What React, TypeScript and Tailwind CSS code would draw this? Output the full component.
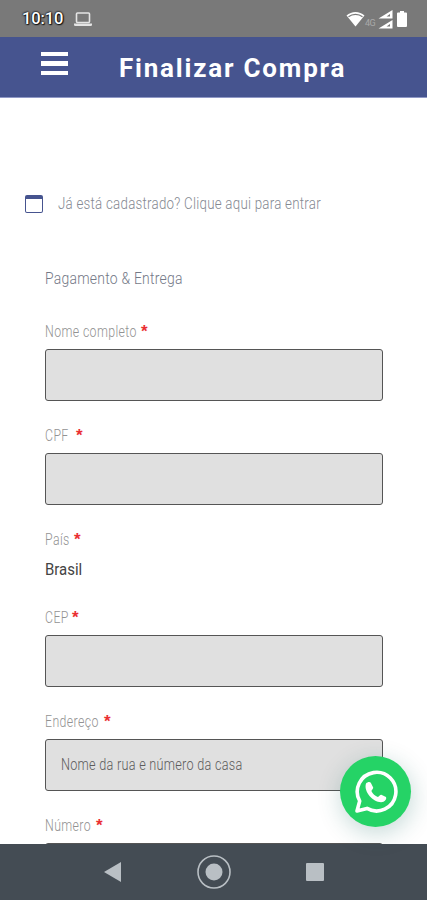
import React from 'react';

interface FieldProps {
  label: string;
  labelClass: string;
  placeholder?: string;
  children?: React.ReactNode;
}

function Field({ label, labelClass, placeholder, children }: FieldProps) {
  return (
    <div className="mb-[18px]">
      <div className="flex h-[34px] items-center text-[16px] font-light text-[#929292]">
        <span className={`${labelClass} shrink-0`}>
          <span className="inline-block origin-left scale-x-[0.77] whitespace-nowrap tracking-[0.5px]">{label}</span>
        </span>
        <span className="relative -top-px font-['Liberation_Sans'] text-[17px] leading-none font-bold text-[#ea2f33]">*</span>
      </div>
      {children ?? (
        <div className="flex h-[52px] items-center rounded-[3px] border border-[#555] bg-[#e0e0e0] pl-[15px]">
          {placeholder && (
            <span className="origin-left scale-x-[0.79] whitespace-nowrap text-[16px] font-light tracking-[0.35px] text-[#5c5c5c]">
              {placeholder}
            </span>
          )}
        </div>
      )}
    </div>
  );
}

function StatusBar() {
  return (
    <div className="flex h-[37px] shrink-0 items-center bg-[#797979] pl-[22px] pr-[20px] pt-px text-white">
      <span className="w-[52px] text-[16.5px] font-medium tracking-[-0.1px] [text-shadow:0_0_2px_#000,0_0_2px_#000,1px_1px_1px_#222]">
        10:10
      </span>
      <svg width="18" height="15" viewBox="0 0 18 15" className="text-[#e4e4e4]">
        <rect x="2.5" y="1" width="13" height="9.5" rx="1" fill="none" stroke="currentColor" strokeWidth="1.6" />
        <path d="M0 11.5h18v1.2a1.3 1.3 0 0 1-1.3 1.3H1.3A1.3 1.3 0 0 1 0 12.7z" fill="currentColor" />
      </svg>
      <svg width="19" height="16" viewBox="0 0 19 16" className="ml-auto">
        <path d="M.5 4.5C5.5-.3 13.5-.3 18.5 4.5L9.5 15.5z" fill="white" />
        <path d="M2.5 5.8c4-3.2 10-3.2 14 0" fill="none" stroke="#797979" strokeWidth="1.2" />
      </svg>
      <span className="mt-[9px] w-[13px] text-[9px] leading-none tracking-[-0.5px] text-[#a9a9a9]">4G</span>
      <svg width="15" height="19" viewBox="0 0 15 19">
        <path d="M14.5 0v8.5H.5zM14.5 10v8.5H.5z" fill="white" />
        <path d="M12 4v2.5H8.5zM12 14v2.5H8.5z" fill="#797979" />
      </svg>
      <svg width="10" height="16" viewBox="0 0 10 16" className="ml-[4px]">
        <path d="M3 0h4v1.5h2a1 1 0 0 1 1 1V15a1 1 0 0 1-1 1H1a1 1 0 0 1-1-1V2.5a1 1 0 0 1 1-1h2z" fill="white" />
      </svg>
    </div>
  );
}

function Header() {
  return (
    <header className="flex h-[61px] shrink-0 items-center border-b border-[#8f98c6] bg-[#46548f] text-white">
      <button className="mb-[7px] ml-[41px] flex w-[27px] flex-col gap-[5px]">
        <span className="h-[4.5px] w-full bg-white" />
        <span className="h-[4.5px] w-full bg-white" />
        <span className="h-[4.5px] w-full bg-white" />
      </button>
      <h1 className="ml-[51px] mt-[2px] whitespace-nowrap text-[26px] font-bold tracking-[1.8px]">Finalizar Compra</h1>
    </header>
  );
}

function NavBar() {
  return (
    <nav className="flex h-[56px] shrink-0 items-center bg-[#444c54] text-[#b9bfc4]">
      <svg width="17" height="20" viewBox="0 0 17 20" className="ml-[104px]">
        <path d="M0 10L17 0v20z" fill="currentColor" />
      </svg>
      <svg width="34" height="34" viewBox="0 0 34 34" className="ml-[76px]">
        <circle cx="17" cy="17" r="16" fill="none" stroke="currentColor" strokeWidth="1.6" />
        <circle cx="17" cy="17" r="8.5" fill="currentColor" />
      </svg>
      <span className="ml-[75px] size-[18px] rounded-[1px] bg-[#b9bfc4]" />
    </nav>
  );
}

function WhatsAppIcon() {
  return (
    <svg width="44" height="44" viewBox="0 0 44 44" fill="none">
      <path d="M3 41l2.7-10A19.3 19.3 0 1 1 13 38.4z" stroke="white" strokeWidth="3.6" strokeLinejoin="round" />
      <path
        d="M12 13.5c1.5-1.6 3.8-2 4.8-.8l2.4 4.8c.4 1-1.6 2.600-1.800 3.500 1.200 2.700 3.800 5 6.500 6 1-.2 2.300-2.500 3.400-2.200l4.700 2.300c.8 1.400-.3 3.800-2.500 4.700C21.500 34.500 9 22.500 12 13.500z"
        fill="white"
      />
    </svg>
  );
}

export default function App() {
  return (
    <div className="flex h-[900px] w-[427px] flex-col overflow-hidden bg-white font-[Roboto,sans-serif]">
      <StatusBar />
      <Header />

      <main className="min-h-0 flex-1 overflow-hidden">
        <div className="mt-[93px] flex h-[26px] items-center pl-[25px] text-[16px] font-light text-[#858992]">
          <span className="mr-[15px] h-[18px] w-[18px] rounded-[2px] border border-t-4 border-[#46548f]" />
          <span className="origin-left scale-x-[0.832] whitespace-nowrap tracking-[0.3px]">
            Já está cadastrado? Clique aqui para entrar
          </span>
        </div>

        <div className="ml-[45px] mt-[48px] w-[338px]">
          <h2 className="mb-[24px] h-[26px] origin-left scale-x-[0.82] whitespace-nowrap text-[17px] leading-[26px] font-light tracking-[0.3px] text-[#747987]">
            Pagamento &amp; Entrega
          </h2>
          <Field label="Nome completo" labelClass="w-[96px]" />
          <Field label="CPF" labelClass="w-[31px]" />
          <Field label="País" labelClass="w-[29px]">
            <div className="h-[26px] origin-left scale-x-[0.88] text-[17px] leading-[25px] text-[#444]">Brasil</div>
          </Field>
          <Field label="CEP" labelClass="w-[27px]" />
          <Field label="Endereço" labelClass="w-[59px]" placeholder="Nome da rua e número da casa" />
          <Field label="Número" labelClass="w-[51px]" />
        </div>
      </main>

      <NavBar />

      <button className="absolute left-[340px] top-[756px] flex size-[71px] items-center justify-center rounded-full bg-[#25d366] shadow-[1px_6px_24px_0_rgba(7,94,84,0.24)]">
        <WhatsAppIcon />
      </button>
    </div>
  );
}
